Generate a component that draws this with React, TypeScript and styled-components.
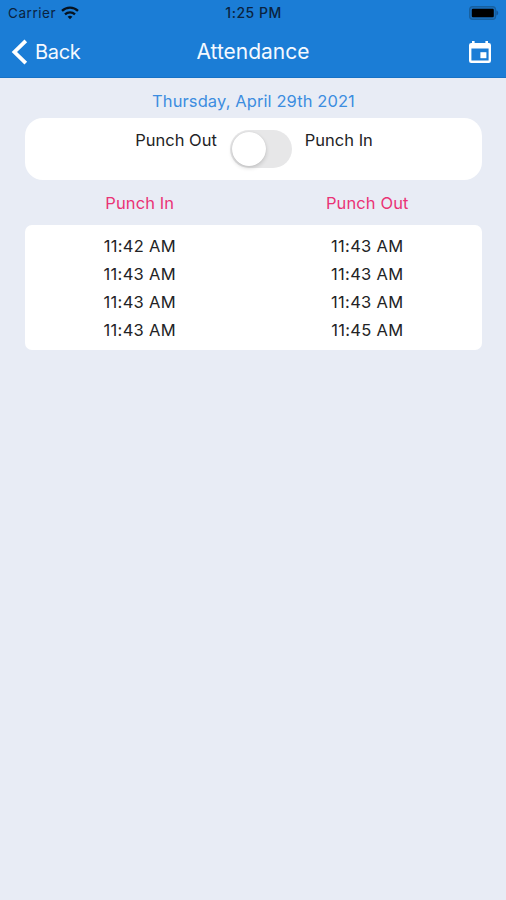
import React from "react";
import styled, { createGlobalStyle } from "styled-components";

const GlobalStyle = createGlobalStyle`
  * { box-sizing: border-box; }
  body {
    margin: 0;
    background: #e8ecf5;
    font-family: Inter, "Liberation Sans", sans-serif;
    color: #232325;
  }
`;

const Screen = styled.div`
  width: 506px;
  height: 900px;
  background: #e8ecf5;
  overflow: hidden;
`;

const Header = styled.header`
  height: 78px;
  background: #1b7dd6;
  border-bottom: 1px solid #1772c6;
`;

const StatusBar = styled.div`
  display: grid;
  grid-template-columns: 1fr auto 1fr;
  align-items: center;
  height: 26px;
  padding: 0 7px 0 8px;
  color: #0a2340;
  font-size: 13.5px;
  line-height: 26px;
`;

const Carrier = styled.div`
  display: flex;
  align-items: center;
  gap: 5px;
  letter-spacing: 0.55px;
`;

const Clock = styled.div`
  font-size: 14px;
  font-weight: 500;
  letter-spacing: 0.5px;
`;

const StatusRight = styled.div`
  display: flex;
  justify-content: flex-end;
`;

const NavBar = styled.nav`
  display: grid;
  grid-template-columns: 1fr auto 1fr;
  align-items: center;
  height: 51px;
  padding: 0 14px;
  color: #f4f9ff;
`;

const BackButton = styled.button`
  display: flex;
  align-items: center;
  gap: 7px;
  margin-left: -3px;
  padding: 0;
  border: 0;
  background: none;
  color: inherit;
  font: 400 20px/28px Inter, sans-serif;
  letter-spacing: -0.3px;
`;

const Title = styled.h1`
  margin: 0;
  font-size: 21px;
  font-weight: 400;
  line-height: 28px;
  letter-spacing: 0;
`;

const CalendarButton = styled.button`
  display: flex;
  justify-self: end;
  padding: 0;
  border: 0;
  background: none;
  color: #fff;
`;

const Content = styled.main`
  padding: 13px 24px 0 25px;
`;

const DateLabel = styled.div`
  height: 27px;
  font-size: 16.5px;
  line-height: 20px;
  letter-spacing: 0.1px;
  text-align: center;
  color: #3c8de0;
`;

const PunchCard = styled.section`
  display: flex;
  justify-content: center;
  height: 62px;
  padding: 12px 0 0 1px;
  border-radius: 18px;
  background: #fff;
`;

const PunchLabel = styled.span`
  font-size: 16.5px;
  line-height: 21px;
`;

const Switch = styled.button`
  width: 62px;
  height: 38px;
  margin: 0 13px;
  padding: 2px;
  border: 0;
  border-radius: 19px;
  background: #e7e7e8;
`;

const Knob = styled.span`
  display: block;
  width: 34px;
  height: 34px;
  border-radius: 50%;
  background: #fff;
  box-shadow: 0 2px 4px rgba(0, 0, 0, 0.16), 0 0 1px rgba(0, 0, 0, 0.12);
`;

const Columns = styled.div`
  display: grid;
  grid-template-columns: 1fr 1fr;
  padding: 0 1px;
  text-align: center;
  font-size: 16.5px;
`;

const ColumnHeads = styled(Columns)`
  height: 45px;
  line-height: 46px;
  letter-spacing: 0.1px;
  color: #ea3376;
`;

const Records = styled.section`
  padding: 7px 0 6px;
  border-radius: 7px;
  background: #fff;
`;

const Row = styled(Columns)`
  height: 28px;
  line-height: 28px;
  letter-spacing: 0.3px;
`;

const records = [
  ["11:42 AM", "11:43 AM"],
  ["11:43 AM", "11:43 AM"],
  ["11:43 AM", "11:43 AM"],
  ["11:43 AM", "11:45 AM"],
];

const WifiIcon = () => (
  <svg width="18" height="14" viewBox="0 0 18 14" fill="none" stroke="#06121f" strokeWidth="2.3">
    <path d="M1 4.9a11.6 11.6 0 0 1 16 0" />
    <path d="M4 8.3a7.3 7.3 0 0 1 10 0" />
    <path d="M9 13.2 6.6 10.8a3.5 3.5 0 0 1 4.8 0z" fill="#06121f" stroke="none" />
  </svg>
);

const BatteryIcon = () => (
  <svg width="30" height="14" viewBox="0 0 30 14">
    <rect x="0.6" y="0.6" width="26" height="12.8" rx="3.2" fill="#1b6fbd" stroke="#17609f" strokeWidth="1.2" />
    <rect x="2.8" y="2.8" width="22" height="8.4" rx="1.2" fill="#000" />
    <path d="M27.4 4.6c2.4.6 2.4 4.2 0 4.8z" fill="#12559a" />
  </svg>
);

const ChevronIcon = () => (
  <svg width="17" height="26" viewBox="0 0 17 26" fill="none" stroke="#fff" strokeWidth="3.8">
    <path d="M14.8 1.9 3.4 13l11.4 11.1" strokeLinejoin="miter" />
  </svg>
);

const CalendarIcon = () => (
  <svg width="24" height="24" viewBox="0 0 24 24" fill="#fff">
    <path
      fillRule="evenodd"
      d="M4 1h2.6v2h10.8V1H20v2h.8A2.2 2.2 0 0 1 23 5.2v15.6a2.2 2.2 0 0 1-2.2 2.2H3.2A2.2 2.2 0 0 1 1 20.8V5.2A2.2 2.2 0 0 1 3.2 3H4zM3.4 8.6v12h17.2v-12z"
    />
    <rect x="12.4" y="12.2" width="6" height="6" />
  </svg>
);

export default function App() {
  return (
    <>
      <GlobalStyle />
      <Screen>
        <Header>
          <StatusBar>
            <Carrier>
              Carrier
              <WifiIcon />
            </Carrier>
            <Clock>1:25 PM</Clock>
            <StatusRight>
              <BatteryIcon />
            </StatusRight>
          </StatusBar>
          <NavBar>
            <BackButton>
              <ChevronIcon />
              Back
            </BackButton>
            <Title>Attendance</Title>
            <CalendarButton aria-label="Pick a date">
              <CalendarIcon />
            </CalendarButton>
          </NavBar>
        </Header>
        <Content>
          <DateLabel>Thursday, April 29th 2021</DateLabel>
          <PunchCard>
            <PunchLabel>Punch Out</PunchLabel>
            <Switch role="switch" aria-checked={false} aria-label="Punch status">
              <Knob />
            </Switch>
            <PunchLabel>Punch In</PunchLabel>
          </PunchCard>
          <ColumnHeads>
            <span>Punch In</span>
            <span>Punch Out</span>
          </ColumnHeads>
          <Records>
            {records.map(([punchIn, punchOut], index) => (
              <Row key={index}>
                <span>{punchIn}</span>
                <span>{punchOut}</span>
              </Row>
            ))}
          </Records>
        </Content>
      </Screen>
    </>
  );
}
